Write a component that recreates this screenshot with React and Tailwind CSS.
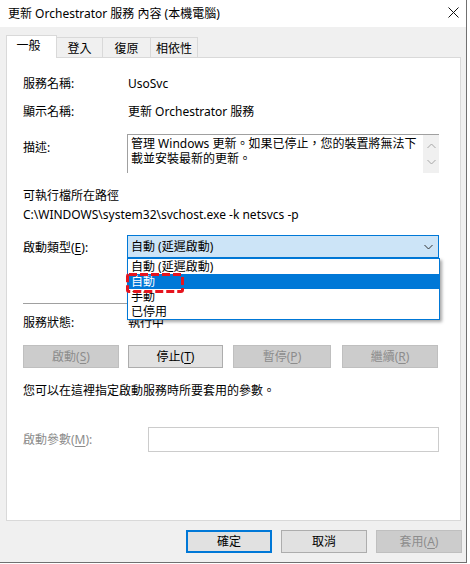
import React from "react";

const Mn = ({ children }) => (
  <span className="underline underline-offset-2 decoration-1">{children}</span>
);

const Btn = ({ w, disabled, primary, children }) => (
  <div
    className={`h-[23px] flex items-center justify-center ${w} ${
      disabled
        ? "bg-[#cccccc] border border-[#bfbfbf] text-[#8c8c8c]"
        : primary
        ? "bg-[#e1e1e1] border-2 border-[#0078d7] text-black"
        : "bg-[#e1e1e1] border border-[#adadad] text-black"
    }`}
  >
    {children}
  </div>
);

const Chevron = ({ up, className }) => (
  <svg width="9" height="6" viewBox="0 0 9 6" className={className}>
    <path
      d={up ? "M0.5 5 L4.5 1 L8.5 5" : "M0.5 1 L4.5 5 L8.5 1"}
      fill="none"
      stroke="currentColor"
      strokeWidth="1"
    />
  </svg>
);

const startupOptions = ["自動 (延遲啟動)", "自動", "手動", "已停用"];

export default function App() {
  return (
    <div className="w-[470px] h-[564px] bg-white flex font-['Noto_Sans','Noto_Sans_CJK_TC',sans-serif] text-[12px] leading-[16px] text-black">
      <div className="w-[467px] h-[563px] bg-[#f0f0f0] border-r border-b border-[#707070] flex flex-col">
        {/* Title bar */}
        <div className="h-[27px] bg-white flex items-center justify-between pl-[8px] pr-[7px] shrink-0">
          <span className="text-[12px]">更新 Orchestrator 服務 內容 (本機電腦)</span>
          <svg width="11" height="11" viewBox="0 0 11 11" className="mb-[3px]">
            <path d="M0.5 0.5 L10.5 10.5 M10.5 0.5 L0.5 10.5" stroke="#111" strokeWidth="1" />
          </svg>
        </div>

        {/* Tabs */}
        <div className="mt-[8px] ml-[6px] h-[23px] flex items-end shrink-0">
          <div className="relative z-10 h-[23px] w-[51px] bg-white border-l border-t border-r border-[#d9d9d9] flex items-start justify-center pt-[2px] pr-[6px]">
            一般
          </div>
          <div className="h-[21px] w-[46px] bg-[#f0f0f0] border-t border-r border-[#d9d9d9] flex items-start justify-center pt-[3px]">
            登入
          </div>
          <div className="h-[21px] w-[48px] bg-[#f0f0f0] border-t border-r border-[#d9d9d9] flex items-start justify-center pt-[3px]">
            復原
          </div>
          <div className="h-[21px] w-[47px] bg-[#f0f0f0] border-t border-r border-[#d9d9d9] flex items-start justify-center pt-[3px]">
            相依性
          </div>
        </div>

        {/* Panel */}
        <div className="-mt-px ml-[6px] w-[455px] h-[464px] bg-white border border-[#d9d9d9] flex flex-col pl-[16px] shrink-0">
          <div className="mt-[16px] h-[20px] flex items-center">
            <span className="w-[105px]">服務名稱:</span>
            <span>UsoSvc</span>
          </div>
          <div className="mt-[8px] h-[20px] flex items-center">
            <span className="w-[105px]">顯示名稱:</span>
            <span>更新 Orchestrator 服務</span>
          </div>

          <div className="mt-[12px] flex items-start">
            <span className="w-[104px] mt-[6px]">描述:</span>
            <div className="w-[312px] h-[39px] border-t border-l border-[#a0a0a0] flex">
              <div className="flex-1 pl-[3px] pt-[1px] leading-[15px]">
                管理 Windows 更新。如果已停止，您的裝置將無法下載並安裝最新的更新。
              </div>
              <div className="w-[16px] bg-[#f0f0f0] flex flex-col items-center justify-between py-[8px] text-[#a6a6a6]">
                <Chevron up />
                <Chevron />
              </div>
            </div>
          </div>

          <div className="mt-[15px]">可執行檔所在路徑</div>
          <div className="mt-[3px]">C:\WINDOWS\system32\svchost.exe -k netsvcs -p</div>

          <div className="mt-[12px] flex items-center">
            <span className="w-[104px] mt-[3px]">
              啟動類型(<Mn>E</Mn>):
            </span>
            <div className="relative z-20 w-[312px] h-[23px] bg-[#cce4f7] border border-[#0078d7] flex items-center justify-between pl-[3px] pr-[5px]">
              <span>自動 (延遲啟動)</span>
              <Chevron className="text-[#333]" />

              {/* open list */}
              <div className="absolute left-[-1px] top-[22px] w-[313px] bg-white border border-[#0078d7] shadow-[2px_2px_3px_rgba(0,0,0,0.35)]">
                {startupOptions.map((opt, i) => (
                  <div
                    key={opt}
                    className={`h-[15px] leading-[15px] pl-[3px] ${
                      i === 1 ? "bg-[#0078d7] text-white" : ""
                    }`}
                  >
                    {opt}
                  </div>
                ))}
                <svg
                  width="58"
                  height="20"
                  viewBox="0 0 58 20"
                  className="absolute left-[-2px] top-[14px]"
                >
                  <rect
                    x="1.5"
                    y="1.5"
                    width="55"
                    height="17"
                    rx="1.5"
                    fill="none"
                    stroke="#e6141e"
                    strokeWidth="3"
                    strokeDasharray="8 3"
                  />
                </svg>
              </div>
            </div>
          </div>

          <div className="mt-[45px] h-px w-[417px] bg-[#a0a0a0]" />

          <div className="mt-[11px] flex">
            <span className="w-[105px]">服務狀態:</span>
            <span>執行中</span>
          </div>

          <div className="mt-[14px] flex">
            <Btn w="w-[96px]" disabled>
              啟動(<Mn>S</Mn>)
            </Btn>
            <div className="w-[9px]" />
            <Btn w="w-[95px]">
              停止(<Mn>T</Mn>)
            </Btn>
            <div className="w-[10px]" />
            <Btn w="w-[98px]" disabled>
              暫停(<Mn>P</Mn>)
            </Btn>
            <div className="w-[11px]" />
            <Btn w="w-[96px]" disabled>
              繼續(<Mn>R</Mn>)
            </Btn>
          </div>

          <div className="mt-[15px]">您可以在這裡指定啟動服務時所要套用的參數。</div>

          <div className="mt-[28px] flex items-center">
            <span className="w-[125px] text-[#8c8c8c]">
              啟動參數(<Mn>M</Mn>):
            </span>
            <div className="w-[291px] h-[25px] border border-[#cccccc] bg-white" />
          </div>
        </div>

        {/* Dialog buttons */}
        <div className="mt-[9px] flex justify-end pr-[4px] gap-[9px]">
          <Btn w="w-[86px]" primary>
            確定
          </Btn>
          <Btn w="w-[86px]">取消</Btn>
          <Btn w="w-[86px]" disabled>
            套用(<Mn>A</Mn>)
          </Btn>
        </div>
      </div>
    </div>
  );
}
